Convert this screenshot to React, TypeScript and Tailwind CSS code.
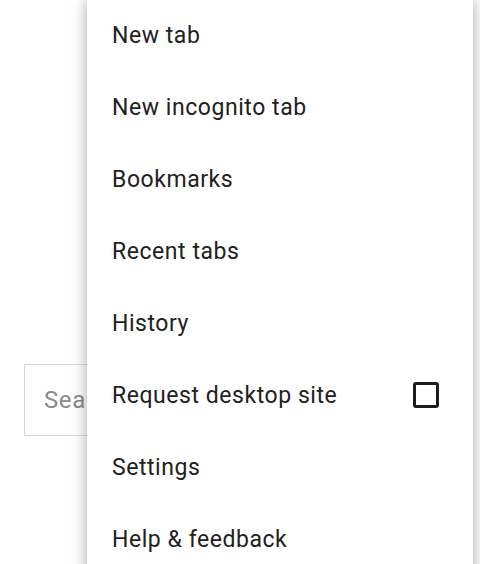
import React from "react";

const items = [
  "New tab",
  "New incognito tab",
  "Bookmarks",
  "Recent tabs",
  "History",
  "Request desktop site",
  "Settings",
  "Help & feedback",
];

export default function App() {
  return (
    <div className="relative w-[480px] h-[564px] overflow-hidden bg-white" style={{ fontFamily: "Roboto, 'Noto Sans', sans-serif" }}>
      <div className="absolute left-[24px] top-[364px] w-[420px] h-[72px] border border-[#d6d6d6] bg-white flex items-center pl-[19px]">
        <span className="text-[24px] tracking-[0.6px] text-[#8a8a8a]">Search or type URL</span>
      </div>
      <div className="absolute left-[87px] top-[-1px] w-[386px] h-[600px] bg-white shadow-[0_0_14px_rgba(0,0,0,0.35)] flex flex-col">
        {items.map((t) => (
          <div key={t} className="h-[72px] shrink-0 flex items-center pl-[25px] pr-[34px] justify-between">
            <span className="text-[23px] tracking-[0.55px] text-[#212121] leading-none">{t}</span>
            {t === "Request desktop site" && (
              <span className="w-[26px] h-[26px] border-[3px] border-[#1c1c1c] rounded-[3px]" />
            )}
          </div>
        ))}
      </div>
    </div>
  );
}
